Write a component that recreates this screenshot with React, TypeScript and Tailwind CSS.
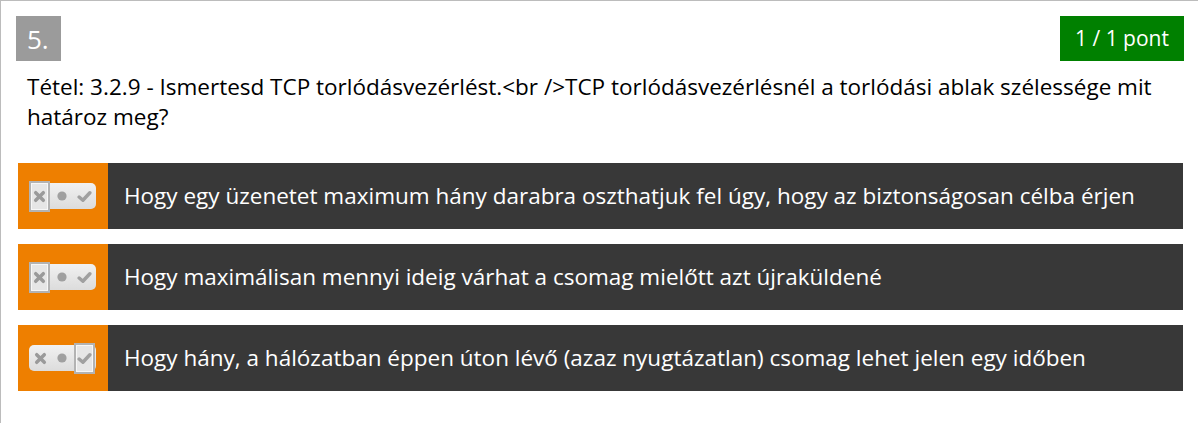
import React from "react";

type Answer = { text: string; selected: 0 | 1 | 2 };

const ANSWERS: Answer[] = [
  { text: "Hogy egy üzenetet maximum hány darabra oszthatjuk fel úgy, hogy az biztonságosan célba érjen", selected: 0 },
  { text: "Hogy maximálisan mennyi ideig várhat a csomag mielőtt azt újraküldené", selected: 0 },
  { text: "Hogy hány, a hálózatban éppen úton lévő (azaz nyugtázatlan) csomag lehet jelen egy időben", selected: 2 },
];

function Cross() {
  return (
    <svg width="13" height="13" viewBox="0 0 12 12">
      <path d="M2.5 2.5 L9.5 9.5 M9.5 2.5 L2.5 9.5" stroke="#9a9a9a" strokeWidth="3.2" strokeLinecap="round" />
    </svg>
  );
}

function Dot() {
  return (
    <svg width="12" height="12" viewBox="0 0 12 12">
      <circle cx="6" cy="6" r="4.6" fill="#a0a0a0" />
    </svg>
  );
}

function Check() {
  return (
    <svg width="15" height="13" viewBox="0 0 14 12">
      <path d="M2 6.5 L5.5 9.5 L12 2.5" stroke="#a0a0a0" strokeWidth="3.2" fill="none" strokeLinecap="round" strokeLinejoin="round" />
    </svg>
  );
}

// tri-state toggle picture (no / skip / yes)
function Toggle({ selected }: { selected: 0 | 1 | 2 }) {
  const icons = [<Cross key="x" />, <Dot key="d" />, <Check key="c" />];
  return (
    <div className="relative flex h-[31px] w-[67px] items-center">
      <div className="flex h-[26px] w-full items-center rounded-[5px] bg-gradient-to-b from-[#f1f1f1] to-[#dcdcdc] blur-[0.5px]">
        {icons.map((icon, i) => (
          <div key={i} className="flex h-full flex-1 items-center justify-center">
            {icon}
          </div>
        ))}
      </div>
      <div
        className={`absolute top-0 flex h-[31px] w-[21px] items-center justify-center border-2 border-[#b3b3b3] bg-[#e6e6e6] shadow-[inset_0_0_0_1px_#f7f7f7] ${
          selected === 0 ? "left-0" : selected === 1 ? "left-[23px]" : "left-[45px]"
        }`}
      >
        <div className="blur-[0.5px]">{icons[selected]}</div>
      </div>
    </div>
  );
}

export default function App() {
  return (
    <div className="h-[423px] w-[1198px] overflow-hidden bg-white" style={{ fontFamily: '"Open Sans", "Liberation Sans", sans-serif' }}>
      <div className="h-full border-l border-t border-[#bcbcbc] pl-[15px] pr-[14px] pt-[15px]">
        <div className="flex items-start justify-between">
          <div className="flex h-[45px] w-[45px] items-center pl-[11px] text-[26px] leading-none text-white bg-[#9b9b9b]">
            5.
          </div>
          <div className="flex h-[45px] w-[124px] items-center justify-center bg-[#008000] text-[21px] text-white">
            1 / 1 pont
          </div>
        </div>

        <p className="mt-[11px] pl-[11px] pr-[20px] text-[22.5px] leading-[30px] text-black">
          Tétel: 3.2.9 - Ismertesd TCP torlódásvezérlést.&lt;br /&gt;TCP torlódásvezérlésnél a torlódási ablak szélessége mit határoz meg?
        </p>

        <div className="ml-[2px] mr-[1px] mt-[31px] flex flex-col gap-[15px]">
          {ANSWERS.map((a, i) => (
            <div key={i} className="flex h-[66px] bg-[#383838]">
              <div className="flex w-[90px] shrink-0 items-center justify-center bg-[#ee7f00] pr-[1px]">
                <Toggle selected={a.selected} />
              </div>
              <div className="flex items-center pl-[16px] text-[22.5px] text-white">{a.text}</div>
            </div>
          ))}
        </div>
      </div>
    </div>
  );
}
